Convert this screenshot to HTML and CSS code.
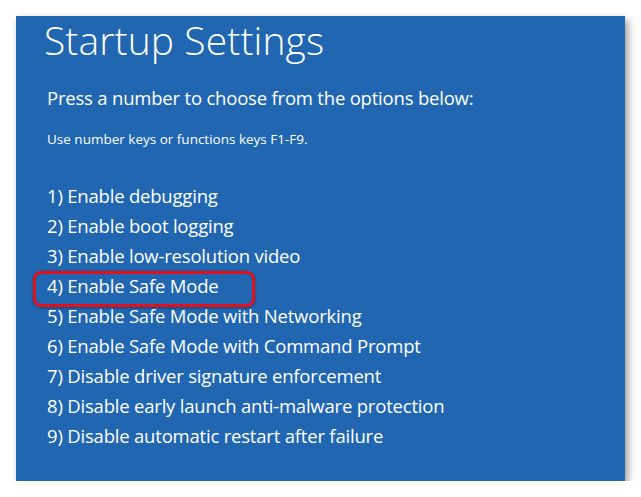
FILE: index.html
```html
<!DOCTYPE html>
<html lang="en">
<head>
    <meta charset="UTF-8">
    <meta name="viewport" content="width=device-width, initial-scale=1.0">
    <title>Startup Settings</title>
    <link rel="stylesheet" href="styles.css">
</head>
<body>

    <!-- Blue boot screen -->
    <div class="screen">
        <h1 class="title">Startup Settings</h1>
        <p class="lead">Press a number to choose from the options below:</p>
        <p class="hint">Use number keys or functions keys F1-F9.</p>

        <ol class="options">
            <li>1) Enable debugging</li>
            <li>2) Enable boot logging</li>
            <li>3) Enable low-resolution video</li>
            <li class="marked">4) Enable Safe Mode</li>
            <li>5) Enable Safe Mode with Networking</li>
            <li>6) Enable Safe Mode with Command Prompt</li>
            <li>7) Disable driver signature enforcement</li>
            <li>8) Disable early launch anti-malware protection</li>
            <li>9) Disable automatic restart after failure</li>
        </ol>
    </div>

</body>
</html>
```

FILE: styles.css
```css
* {
    margin: 0;
    padding: 0;
    box-sizing: border-box;
}

body {
    font-family: "Open Sans", "Noto Sans", sans-serif;
    background-color: #ffffff;
    color: #ffffff;
}

/* Screen panel */
.screen {
    margin: 16px 0 0 16px;
    width: 609px;
    height: 465px;
    background-color: #2066b1;
    box-shadow: 3px 4px 8px rgba(0, 0, 0, 0.4);
    padding: 0 0 0 31px;
}

.title {
    font-size: 39px;
    font-weight: 300;
    line-height: 48px;
    letter-spacing: 0.1px;
    margin-left: -3px;
}

.lead {
    font-size: 18.5px;
    line-height: 30px;
    letter-spacing: -0.2px;
    margin-top: 19px;
}

.hint {
    font-size: 13.5px;
    line-height: 20px;
    margin-top: 16px;
}

/* Option list */
.options {
    list-style: none;
    margin-top: 32px;
}

.options li {
    font-size: 18.5px;
    line-height: 30px;
    letter-spacing: -0.2px;
}

.options li.marked {
    position: relative;
}

.options li.marked::after {
    content: "";
    position: absolute;
    left: -14px;
    top: 0;
    width: 216px;
    height: 30px;
    border: 3px solid #e3101c;
    border-radius: 8px;
    box-shadow: 0 1px 3px rgba(0, 0, 0, 0.35);
}
```
